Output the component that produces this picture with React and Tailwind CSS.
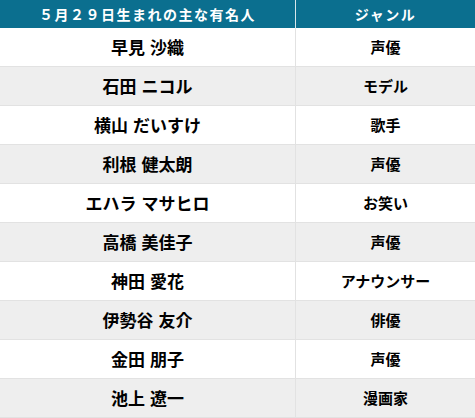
import React from 'react';

const rows = [
  ['早見 沙織', '声優'],
  ['石田 ニコル', 'モデル'],
  ['横山 だいすけ', '歌手'],
  ['利根 健太朗', '声優'],
  ['エハラ マサヒロ', 'お笑い'],
  ['高橋 美佳子', '声優'],
  ['神田 愛花', 'アナウンサー'],
  ['伊勢谷 友介', '俳優'],
  ['金田 朋子', '声優'],
  ['池上 遼一', '漫画家'],
];

const App = () => {
  return (
    <div className="w-[475px] h-[418px] overflow-hidden bg-white font-['Noto_Sans_CJK_JP',sans-serif] text-black">
      <div className="grid grid-cols-[296px_1fr] h-[28px] bg-[#0b6f8f] text-white font-bold text-[14px] tracking-[1.5px]">
        <div className="flex items-center justify-center border-r border-[#d8e6ea]">５月２９日生まれの主な有名人</div>
        <div className="flex items-center justify-center">ジャンル</div>
      </div>
      {rows.map(([name, genre], i) => (
        <div
          key={name}
          className={`grid grid-cols-[296px_1fr] h-[39px] border-b border-[#e2e2e2] ${i % 2 === 1 ? 'bg-[#eeeeee]' : 'bg-white'}`}
        >
          <div className="flex items-center justify-center border-r border-[#e2e2e2] font-bold text-[17px] [word-spacing:1px]">{name}</div>
          <div className="flex items-center justify-center font-bold text-[15px]">{genre}</div>
        </div>
      ))}
    </div>
  );
};

export default App;
